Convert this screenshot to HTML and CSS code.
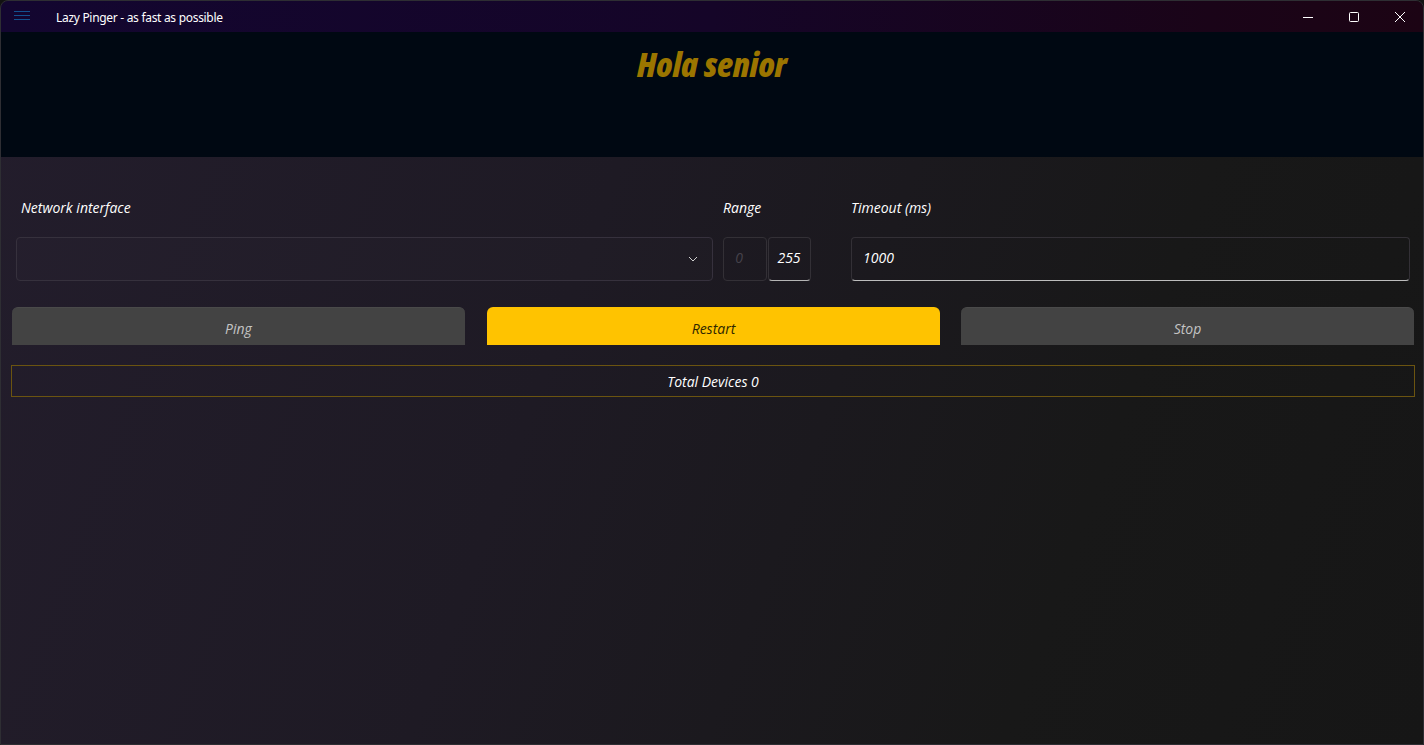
FILE: index.html
```html
<!DOCTYPE html>
<html>
<head>
<meta charset="utf-8">
<title>Lazy Pinger</title>
<link rel="stylesheet" href="styles.css">
</head>
<body>
<div class="window">
  <div class="titlebar">
    <div class="menu-icon">
      <svg width="16" height="10" viewBox="0 0 16 10"><path d="M0 0.5H16M0 4.5H16M0 8.5H16" stroke="#13528f" stroke-width="1"/></svg>
    </div>
    <div class="app-title">Lazy Pinger - as fast as possible</div>
    <div class="controls">
      <div class="ctl"><svg width="10" height="10" viewBox="0 0 10 10"><path d="M0 5.5H10" stroke="#fff" stroke-width="1"/></svg></div>
      <div class="ctl"><svg width="10" height="10" viewBox="0 0 10 10"><rect x="0.5" y="0.5" width="9" height="9" rx="1" fill="none" stroke="#fff" stroke-width="1"/></svg></div>
      <div class="ctl"><svg width="10" height="10" viewBox="0 0 10 10"><path d="M0 0L10 10M10 0L0 10" stroke="#fff" stroke-width="1"/></svg></div>
    </div>
  </div>
  <div class="hero">
    <h1 class="greeting">Hola senior</h1>
  </div>
  <div class="content">
    <div class="form-grid">
      <div class="field field-net">
        <label class="label">Network interface</label>
        <div class="combo">
          <svg class="chev" width="10" height="6" viewBox="0 0 10 6"><path d="M1 1L5 5L9 1" fill="none" stroke="#cfcfcf" stroke-width="1"/></svg>
        </div>
      </div>
      <div class="field field-range">
        <label class="label">Range</label>
        <div class="range-boxes">
          <div class="box box-dim">0</div>
          <div class="box box-active">255</div>
        </div>
      </div>
      <div class="field field-timeout">
        <label class="label">Timeout (ms)</label>
        <div class="box text-input">1000</div>
      </div>
    </div>
    <div class="buttons">
      <button class="btn btn-gray">Ping</button>
      <button class="btn btn-yellow">Restart</button>
      <button class="btn btn-gray">Stop</button>
    </div>
    <div class="total">Total Devices 0</div>
  </div>
</div>
</body>
</html>
```

FILE: styles.css
```css
* { box-sizing: border-box; }
html, body { margin: 0; padding: 0; height: 100%; background: #121212; }
body { font-family: "Open Sans", "Noto Sans", sans-serif; overflow: hidden; }

.window {
  width: 1424px;
  height: 745px;
  border: 1px solid #2e2e33;
  border-radius: 8px 8px 0 0;
  overflow: hidden;
  display: flex;
  flex-direction: column;
  background: linear-gradient(110deg, #231d2c 0%, #1e1a24 40%, #181818 75%, #161616 100%);
}

.titlebar {
  height: 31px;
  flex: 0 0 31px;
  display: flex;
  align-items: center;
  background: linear-gradient(90deg, #130630 0%, #150528 50%, #1a0418 85%, #1c0414 100%);
}
.menu-icon {
  width: 55px;
  padding-left: 13px;
  display: flex;
  align-items: center;
  height: 100%;
}
.menu-icon svg { display: block; margin-top: -2px; }
.app-title {
  font-family: "Noto Sans", "Open Sans", sans-serif;
  font-size: 12px;
  letter-spacing: -0.3px;
  color: #ffffff;
  flex: 1;
  margin-top: 1px;
}
.controls { display: flex; height: 100%; }
.ctl {
  width: 46px;
  height: 100%;
  display: flex;
  align-items: center;
  justify-content: center;
}
.ctl svg { display: block; }

.hero {
  height: 125px;
  flex: 0 0 125px;
  background: #000812;
  display: flex;
  justify-content: center;
}
.greeting {
  margin: 11px 0 0 0;
  font-family: "Open Sans", sans-serif;
  font-stretch: 80%;
  font-weight: 800;
  font-style: italic;
  font-size: 34px;
  color: #9b7500;
  letter-spacing: 0.1px;
  line-height: 42px;
}

.content {
  flex: 1;
  padding: 41px 9px 0 10px;
}

.label {
  display: block;
  font-style: italic;
  font-size: 14px;
  color: #ffffff;
  height: 20px;
  line-height: 20px;
  margin-bottom: 19px;
}

.form-grid {
  display: flex;
  align-items: flex-start;
}
.field-net { width: 697px; margin-left: 5px; }
.field-net .label { padding-left: 5px; }
.field-range { margin-left: 10px; width: 88px; }
.field-timeout { margin-left: 40px; width: 559px; }

.combo {
  height: 44px;
  border: 1px solid #36313d;
  border-radius: 4px;
  background: rgba(255,255,255,0.01);
  display: flex;
  align-items: center;
  justify-content: flex-end;
  padding-right: 14px;
}
.chev { display: block; }

.range-boxes { display: flex; gap: 1px; }
.box {
  height: 44px;
  border: 1px solid #333036;
  border-radius: 4px;
  display: flex;
  align-items: center;
  font-style: italic;
  font-size: 14px;
  color: #ffffff;
  padding-bottom: 3px;
}
.box-dim {
  width: 44px;
  justify-content: center;
  color: #45424b;
  padding-right: 12px;
}
.box-active {
  width: 43px;
  justify-content: center;
  border-bottom: 1px solid #b5b5b5;
  padding-right: 1px;
}
.text-input {
  width: 559px;
  padding-left: 11px;
  border-bottom: 1px solid #bdbdbd;
}

.buttons {
  display: flex;
  gap: 22px;
  margin-top: 26px;
  padding-left: 1px;
}
.btn {
  width: 453px;
  height: 38px;
  border: none;
  border-radius: 6px 6px 0 0;
  font-family: "Open Sans", "Noto Sans", sans-serif;
  font-style: italic;
  font-size: 14px;
  padding: 4px 0 0 0;
}
.btn-gray { background: #434343; color: #c4c4c4; border-top: 1px solid #4a4a4a; }
.btn-yellow { background: #ffc300; color: #2e2700; }
.buttons .btn:nth-child(3) { margin-left: -1px; }

.total {
  margin-top: 20px;
  width: 1404px;
  height: 32px;
  border: 1px solid #6b5410;
  display: flex;
  align-items: center;
  justify-content: center;
  font-style: italic;
  font-size: 14px;
  color: #ffffff;
}
```
